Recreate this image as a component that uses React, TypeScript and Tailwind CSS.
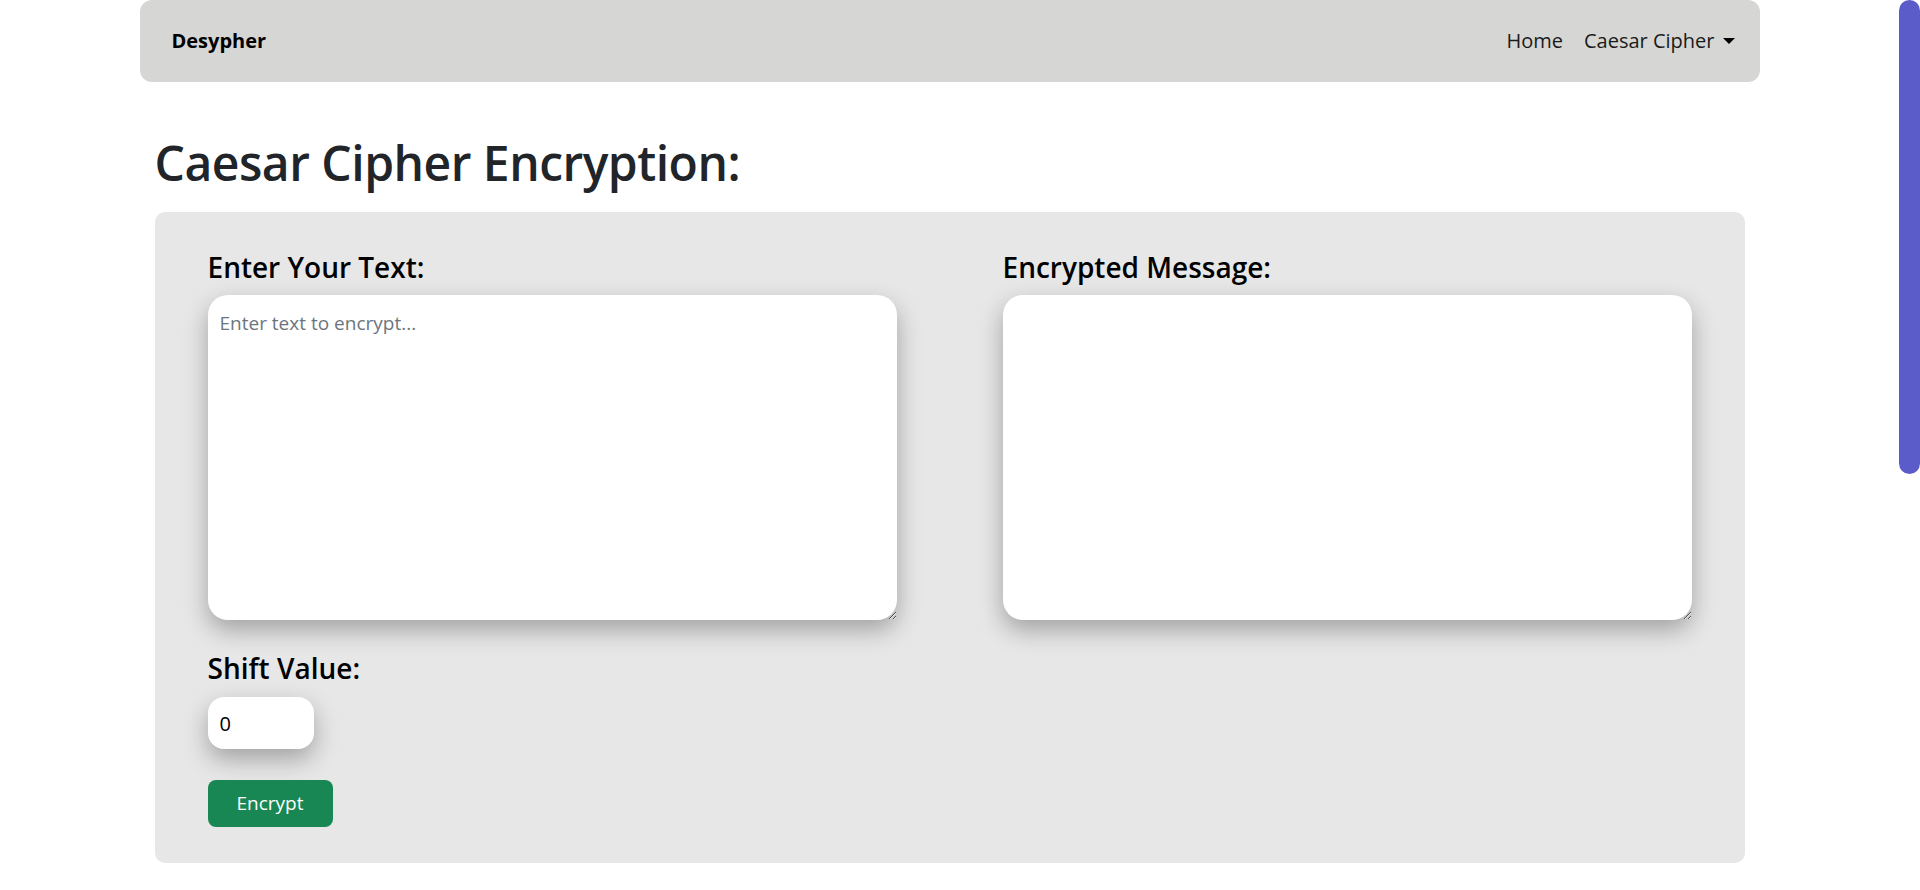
import React, { useState } from 'react';

const font = { fontFamily: '"Open Sans", "Noto Sans", sans-serif' };

const App: React.FC = () => {
  const [text, setText] = useState('');
  const [shift, setShift] = useState('0');
  const [output, setOutput] = useState('');

  // Simple caesar shift, output shown in the right box
  const encrypt = (input: string, n: number): string =>
    input.replace(/[a-z]/gi, (ch) => {
      const base = ch <= 'Z' ? 65 : 97;
      return String.fromCharCode(((ch.charCodeAt(0) - base + (n % 26) + 26) % 26) + base);
    });

  return (
    <div className="h-screen flex bg-white overflow-hidden" style={font}>
      <div className="flex-1 min-w-0">
        <div className="w-[1620px] mx-auto">
          {/* Navbar */}
          <nav className="h-[82px] bg-[#d6d6d4] rounded-[12px] flex items-center justify-between pl-[32px] pr-[25px]">
            <a className="text-[20px] font-bold text-black">Desypher</a>
            <div className="flex items-center gap-[21px] text-[20px] text-[#1a1a1a]">
              <a>Home</a>
              <a className="flex items-center">
                Caesar Cipher
                <span className="ml-[8px] w-0 h-0 border-x-[6px] border-x-transparent border-t-[6px] border-t-black" />
              </a>
            </div>
          </nav>

          <main className="px-[15px]">
            <h1 className="mt-[51px] mb-[19px] text-[48px] leading-[60px] font-semibold tracking-[-0.5px] text-[#212529]">
              Caesar Cipher Encryption:
            </h1>

            <div className="bg-[#e7e7e7] rounded-[10px] pt-[38px] pb-[36px] px-[53px]">
              <div className="grid grid-cols-2 gap-[106px]">
                <div className="flex flex-col items-start">
                  <label className="text-[28px] leading-[35px] font-semibold text-black">Enter Your Text:</label>
                  <textarea
                    value={text}
                    onChange={(e) => setText(e.target.value)}
                    placeholder="Enter text to encrypt..."
                    className="mt-[10px] w-full h-[325px] bg-white rounded-[20px] px-[12px] py-[14px] text-[19px] placeholder:text-[#6c757d] shadow-[0_10px_25px_rgba(0,0,0,0.3)] outline-none"
                  />
                  <label className="mt-[31px] text-[28px] leading-[35px] font-semibold text-black">Shift Value:</label>
                  <input
                    type="text"
                    value={shift}
                    onChange={(e) => setShift(e.target.value)}
                    className="mt-[11px] w-[106px] h-[52px] bg-white rounded-[16px] px-[12px] text-[20px] text-black shadow-[0_10px_25px_rgba(0,0,0,0.3)] outline-none"
                  />
                  <button
                    onClick={() => setOutput(encrypt(text, parseInt(shift, 10) || 0))}
                    className="mt-[31px] w-[125px] h-[47px] bg-[#198754] text-white text-[19px] rounded-[8px] flex items-center justify-center"
                  >
                    Encrypt
                  </button>
                </div>
                <div className="flex flex-col items-start">
                  <label className="text-[28px] leading-[35px] font-semibold text-black">Encrypted Message:</label>
                  <textarea
                    value={output}
                    readOnly
                    className="mt-[10px] w-full h-[325px] bg-white rounded-[20px] px-[12px] py-[14px] text-[19px] shadow-[0_10px_25px_rgba(0,0,0,0.3)] outline-none"
                  />
                </div>
              </div>
            </div>
          </main>
        </div>
      </div>

      {/* scrollbar rail */}
      <div className="w-[21px] shrink-0 bg-white">
        <div className="h-[474px] rounded-full bg-[#5b5bc9]" />
      </div>
    </div>
  );
};

export default App;
